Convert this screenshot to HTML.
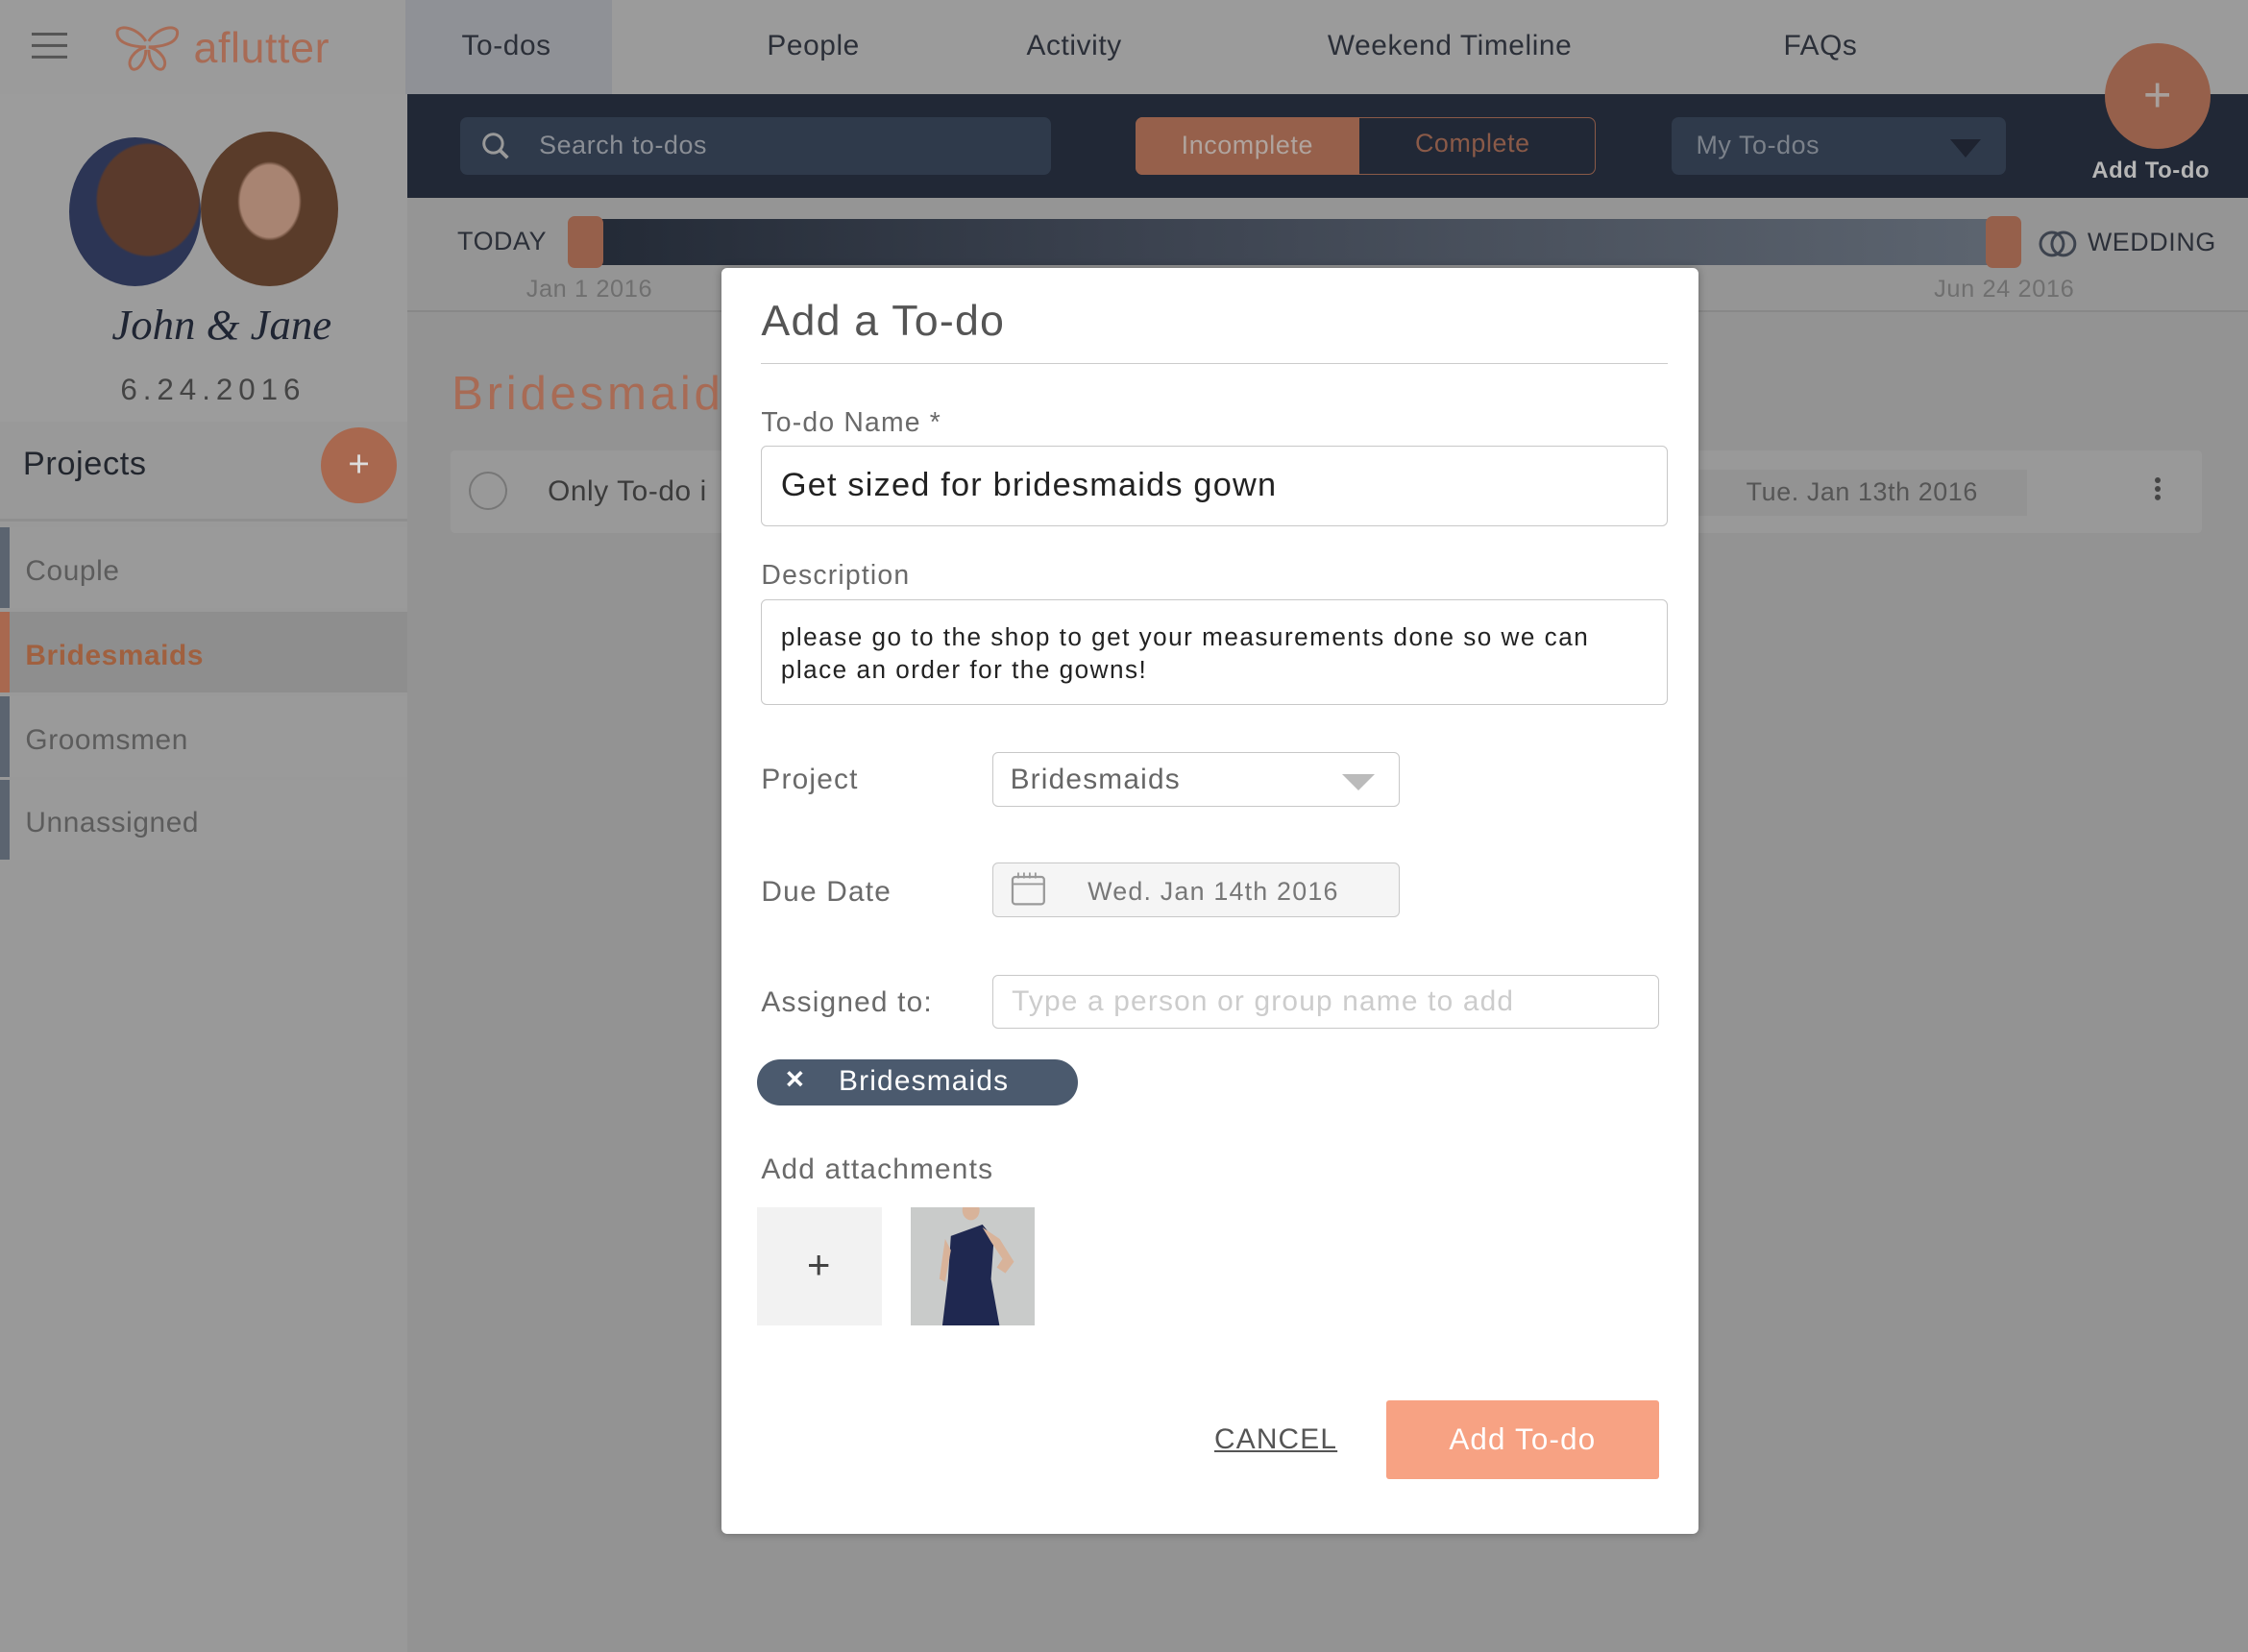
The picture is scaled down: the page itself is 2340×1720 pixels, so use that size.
<!DOCTYPE html>
<html><head><meta charset="utf-8"><style>
*{box-sizing:border-box;margin:0;padding:0}
html,body{width:2340px;height:1720px;overflow:hidden;background:#939393}
#r{zoom:1.49234;width:1568px;height:1153px;position:relative;font-family:"Liberation Sans",sans-serif;color:#3a3a3a;letter-spacing:0.4px}
.a{position:absolute}
.nav{left:0;top:0;width:1568px;height:66px;background:#9b9b9b}
.nav span{position:absolute;top:21px;font-size:20px;color:#2b2f38}
.side{left:0;top:66px;width:284px;height:1087px;background:#999}
.item{position:absolute;left:0;width:284px;height:56px;border-left:7px solid #5b6470;font-size:20px;color:#5c5c5c;padding:19px 0 0 11px;background:#9a9a9a}
.m{letter-spacing:0.8px}
</style></head><body><div id="r">
<div class="a nav">
 <div class="a" style="left:22px;top:23px;width:25px;height:2px;background:#555;box-shadow:0 8px 0 #555,0 16px 0 #555"></div>
 <svg class="a" style="left:80px;top:17px" width="46" height="34" viewBox="0 0 46 34"><g fill="none" stroke="#a86b55" stroke-width="2"><path d="M22 12 C16 2 2 0 2 6 C2 14 14 16 22 16 C14 18 8 26 12 31 C16 34 22 26 22 18"/><path d="M24 12 C30 2 44 0 44 6 C44 14 32 16 24 16 C32 18 38 26 34 31 C30 34 24 26 24 18"/></g></svg>
 <span style="left:135px;top:17px;font-size:30px;color:#a86b55">aflutter</span>
 <div class="a" style="left:283px;top:0;width:144px;height:66px;background:#8f9196"></div>
 <span style="left:322px">To-dos</span><span style="left:535px">People</span><span style="left:716px">Activity</span><span style="left:926px">Weekend Timeline</span><span style="left:1244px">FAQs</span>
</div>
<div class="a side">
 <div class="a" style="left:0;top:0;width:284px;height:228px;background:#9c9c9c"></div>
 <div class="a" style="left:48px;top:30px;width:92px;height:104px;border-radius:50%;background:radial-gradient(ellipse at 60% 42%,#5a3a2c 0 45%,#2c3555 47% 100%)"></div>
 <div class="a" style="left:140px;top:26px;width:96px;height:108px;border-radius:50%;background:radial-gradient(ellipse at 50% 45%,#a88472 0 30%,#5a3c2a 33% 100%)"></div>
 <div class="a" style="left:78px;top:143px;font-family:'Liberation Serif',serif;font-style:italic;font-size:30px;color:#1f2533;letter-spacing:0">John &amp; Jane</div>
 <div class="a" style="left:84px;top:194px;font-size:21px;letter-spacing:4px;color:#444">6.24.2016</div>
 <div class="a" style="left:16px;top:245px;font-size:23px;color:#22262e">Projects</div>
 <div class="a" style="left:224px;top:232px;width:53px;height:53px;border-radius:50%;background:#a8684f;color:#ddd;font-size:26px;text-align:center;line-height:52px">+</div>
 <div class="a" style="left:0;top:296px;width:284px;height:2px;background:#8f8f8f"></div>
 <div class="item" style="top:302px">Couple</div>
 <div class="item" style="top:361px;background:#8e8e8e;border-color:#a8684f;color:#a0603f;font-weight:bold">Bridesmaids</div>
 <div class="item" style="top:420px">Groomsmen</div>
 <div class="item" style="top:478px">Unnassigned</div>
</div>
<div class="a" style="left:284px;top:66px;width:1284px;height:72px;background:#212836"></div>
<div class="a" style="left:321px;top:82px;width:412px;height:40px;border-radius:5px;background:#2f3a4b"></div>
<svg class="a" style="left:335px;top:91px" width="22" height="22"><circle cx="9" cy="9" r="6.5" fill="none" stroke="#999" stroke-width="2"/><path d="M14 14l5 5" stroke="#999" stroke-width="2.5"/></svg>
<div class="a" style="left:376px;top:91px;font-size:18px;color:#8a8e95">Search to-dos</div>
<div class="a" style="left:792px;top:82px;width:321px;height:40px;border:1px solid #8a5a48;border-radius:5px"></div>
<div class="a" style="left:792px;top:82px;width:156px;height:40px;border-radius:5px 0 0 5px;background:#96604b;color:#b0a49e;font-size:18px;text-align:center;line-height:40px">Incomplete</div>
<div class="a" style="left:987px;top:90px;font-size:18px;color:#8a5a48">Complete</div>
<div class="a" style="left:1166px;top:82px;width:233px;height:40px;border-radius:5px;background:#2f3a4b"></div>
<div class="a" style="left:1183px;top:91px;font-size:18px;color:#7b818a">My To-dos</div>
<div class="a" style="left:1360px;top:97px;border-left:11px solid transparent;border-right:11px solid transparent;border-top:13px solid #1e2330"></div>
<div class="a" style="left:1468px;top:30px;width:74px;height:74px;border-radius:50%;background:#96604b;color:#a8a09c;font-size:34px;text-align:center;line-height:72px">+</div>
<div class="a" style="left:1459px;top:110px;font-size:16px;color:#b6b6b6;font-weight:bold">Add To-do</div>
<div class="a" style="left:284px;top:138px;width:1284px;height:80px;background:#959595;border-bottom:2px solid #888"></div>
<div class="a" style="left:319px;top:158px;font-size:18px;color:#2b2f38">TODAY</div>
<div class="a" style="left:410px;top:153px;width:990px;height:32px;background:linear-gradient(90deg,#232a36,#3c4350 40%,#5d6570)"></div>
<div class="a" style="left:396px;top:151px;width:25px;height:36px;border-radius:5px;background:#96604b"></div>
<div class="a" style="left:1385px;top:151px;width:25px;height:36px;border-radius:5px;background:#96604b"></div>
<div class="a" style="left:367px;top:192px;font-size:17px;color:#6f6f6f">Jan 1 2016</div>
<div class="a" style="left:1349px;top:192px;font-size:17px;color:#6f6f6f">Jun 24 2016</div>
<svg class="a" style="left:1421px;top:158px" width="30" height="24"><circle cx="10" cy="12" r="8" fill="none" stroke="#3d434e" stroke-width="2"/><circle cx="18" cy="12" r="8" fill="none" stroke="#3d434e" stroke-width="2"/></svg>
<div class="a" style="left:1456px;top:159px;font-size:18px;color:#2b2f38">WEDDING</div>
<div class="a" style="left:315px;top:255px;font-size:33px;letter-spacing:2.5px;color:#a86b55">Bridesmaids</div>
<div class="a" style="left:314px;top:314px;width:1222px;height:58px;background:#999;border-radius:3px"></div>
<div class="a" style="left:327px;top:329px;width:27px;height:27px;border-radius:50%;border:1.5px solid #777"></div>
<div class="a" style="left:382px;top:332px;font-size:20px;color:#3b3b3b">Only To-do i</div>
<div class="a" style="left:1180px;top:328px;width:234px;height:32px;background:#939393"></div>
<div class="a" style="left:1218px;top:333px;font-size:18px;color:#555">Tue. Jan 13th 2016</div>
<div class="a" style="left:1503px;top:333px;width:4px;height:4px;border-radius:50%;background:#444;box-shadow:0 6px 0 #444,0 12px 0 #444"></div>

<div class="a m" style="left:503px;top:187px;width:682px;height:883px;background:#fff;border-radius:4px;box-shadow:0 0 6px rgba(0,0,0,.3)">
 <div class="a" style="left:28px;top:20px;font-size:30px;color:#555">Add a To-do</div>
 <div class="a" style="left:28px;top:66px;width:632px;height:1px;background:#ccc"></div>
 <div class="a" style="left:28px;top:97px;font-size:19px;color:#6a6a6a">To-do Name *</div>
 <div class="a" style="left:28px;top:124px;width:632px;height:56px;border:1px solid #c8c8c8;border-radius:4px;font-size:23px;color:#222;padding:14px 0 0 13px">Get sized for bridesmaids gown</div>
 <div class="a" style="left:28px;top:204px;font-size:19px;color:#6a6a6a">Description</div>
 <div class="a" style="left:28px;top:231px;width:632px;height:74px;border:1px solid #c8c8c8;border-radius:4px;font-size:17.5px;line-height:23px;color:#222;padding:14px 0 0 13px;letter-spacing:1px">please go to the shop to get your measurements done so we can<br>place an order for the gowns!</div>
 <div class="a" style="left:28px;top:346px;font-size:20px;color:#6a6a6a">Project</div>
 <div class="a" style="left:189px;top:338px;width:284px;height:38px;border:1px solid #c8c8c8;border-radius:4px;font-size:20px;color:#666;padding:7px 0 0 12px">Bridesmaids</div>
 <div class="a" style="left:433px;top:353px;border-left:12px solid transparent;border-right:12px solid transparent;border-top:12px solid #bbb"></div>
 <div class="a" style="left:28px;top:424px;font-size:20px;color:#6a6a6a">Due Date</div>
 <div class="a" style="left:189px;top:415px;width:284px;height:38px;border:1px solid #c8c8c8;border-radius:4px;background:#f5f5f5;font-size:18px;color:#777;padding:9px 0 0 66px">Wed. Jan 14th 2016</div>
 <svg class="a" style="left:201px;top:421px" width="26" height="26"><rect x="2" y="4" width="22" height="19" rx="2" fill="none" stroke="#999" stroke-width="1.5"/><path d="M2 9h22M6 1v4M10 1v4M14 1v4M18 1v4" stroke="#999" stroke-width="1.2"/></svg>
 <div class="a" style="left:28px;top:501px;font-size:20px;color:#6a6a6a">Assigned to:</div>
 <div class="a" style="left:189px;top:493px;width:465px;height:38px;border:1px solid #c8c8c8;border-radius:4px;font-size:20px;color:#ccc;padding:7px 0 0 13px">Type a person or group name to add</div>
 <div class="a" style="left:25px;top:552px;width:224px;height:32px;border-radius:16px;background:#4b5a6e;color:#fff;font-size:20px;padding:4px 0 0 57px">Bridesmaids</div>
 <div class="a" style="left:45px;top:553px;color:#fff;font-size:22px;font-weight:bold">×</div>
 <div class="a" style="left:28px;top:618px;font-size:20px;color:#6a6a6a">Add attachments</div>
 <div class="a" style="left:25px;top:655px;width:87px;height:83px;background:#f2f2f2;color:#444;font-size:28px;text-align:center;line-height:80px">+</div>
 <svg class="a" style="left:132px;top:655px" width="87" height="83"><rect width="87" height="83" fill="#c9cbca"/><path d="M28 20 L50 12 L58 22 L56 50 L62 83 L22 83 L26 50 Z" fill="#1f2850"/><ellipse cx="42" cy="2" rx="6" ry="7" fill="#d8b39a"/><path d="M50 14 L62 22 L72 38 L66 46 L60 42 L64 36 L56 24Z" fill="#d8b39a"/><path d="M24 22 L20 50 L24 52 L28 30Z" fill="#d8b39a"/></svg>
 <div class="a" style="left:344px;top:806px;font-size:20px;color:#555;text-decoration:underline">CANCEL</div>
 <div class="a" style="left:464px;top:790px;width:190px;height:55px;background:#f7a283;border-radius:2px;color:#fff;font-size:21px;text-align:center;line-height:55px">Add To-do</div>
</div>
</div></body></html>
